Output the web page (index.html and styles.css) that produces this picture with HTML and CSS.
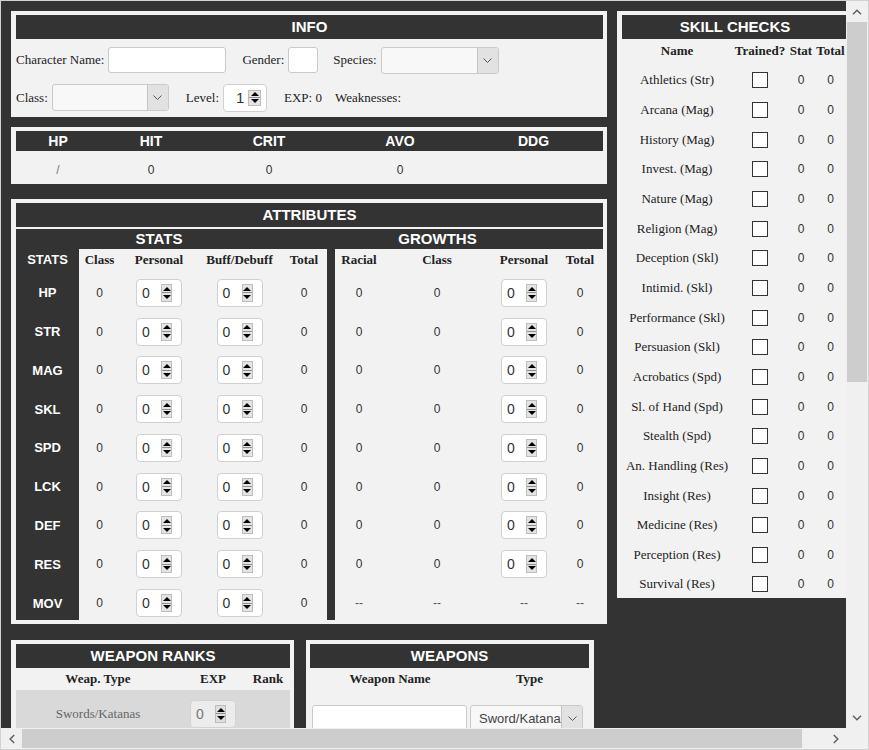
FILE: index.html
```html
<!DOCTYPE html>
<html>
<head>
<meta charset="utf-8">
<title>Character Sheet</title>
<link rel="stylesheet" href="styles.css">
</head>
<body>
<div class="window">
  <div class="viewport">
    <div class="page">
      <div class="col-left">
        <section class="panel info">
          <div class="hbar">INFO</div>
          <div class="info-row r1">
            <span class="lbl">Character Name:</span><span class="field txt w-name"></span>
            <span class="lbl gap16">Gender:</span><span class="field txt w-gender"></span>
            <span class="lbl gap15">Species:</span><span class="field sel w-species"><span class="sel-val"></span><span class="sel-btn"><svg width="9" height="5" viewBox="0 0 9 5"><path d="M0.5 0.5 L4.5 4.5 L8.5 0.5" fill="none" stroke="#555" stroke-width="1"/></svg></span></span>
          </div>
          <div class="info-row r2">
            <span class="lbl">Class:</span><span class="field sel w-class"><span class="sel-val"></span><span class="sel-btn"><svg width="9" height="5" viewBox="0 0 9 5"><path d="M0.5 0.5 L4.5 4.5 L8.5 0.5" fill="none" stroke="#555" stroke-width="1"/></svg></span></span>
            <span class="lbl gap17">Level:</span><span class="num lvl"><span class="nv">1</span><span class="spin"><i class="up"></i><i class="dn"></i></span></span>
            <span class="lbl gap17">EXP: 0</span>
            <span class="lbl gap9">Weaknesses:</span>
          </div>
        </section>

        <section class="panel combat">
          <div class="combat-grid">
            <div class="ch">HP</div><div class="ch">HIT</div><div class="ch">CRIT</div><div class="ch">AVO</div><div class="ch">DDG</div>
            <div class="cv slash">/</div><div class="cv">0</div><div class="cv">0</div><div class="cv">0</div><div class="cv"></div>
          </div>
        </section>

        <section class="panel attrs">
          <div class="hbar">ATTRIBUTES</div>
          <div class="subbar"><span class="sub-stats">STATS</span><span class="sub-growths">GROWTHS</span></div>
          <div class="attr-body">
            <div class="stat-grid">
              <div class="gl gl-h">STATS</div><div class="gh">Class</div><div class="gh">Personal</div><div class="gh">Buff/Debuff</div><div class="gh">Total</div>

              <div class="gl">HP</div><div class="gc v">0</div><div class="gc"><span class="num"><span class="nv">0</span><span class="spin"><i class="up"></i><i class="dn"></i></span></span></div><div class="gc"><span class="num"><span class="nv">0</span><span class="spin"><i class="up"></i><i class="dn"></i></span></span></div><div class="gc v">0</div>
              <div class="gl">STR</div><div class="gc v">0</div><div class="gc"><span class="num"><span class="nv">0</span><span class="spin"><i class="up"></i><i class="dn"></i></span></span></div><div class="gc"><span class="num"><span class="nv">0</span><span class="spin"><i class="up"></i><i class="dn"></i></span></span></div><div class="gc v">0</div>
              <div class="gl">MAG</div><div class="gc v">0</div><div class="gc"><span class="num"><span class="nv">0</span><span class="spin"><i class="up"></i><i class="dn"></i></span></span></div><div class="gc"><span class="num"><span class="nv">0</span><span class="spin"><i class="up"></i><i class="dn"></i></span></span></div><div class="gc v">0</div>
              <div class="gl">SKL</div><div class="gc v">0</div><div class="gc"><span class="num"><span class="nv">0</span><span class="spin"><i class="up"></i><i class="dn"></i></span></span></div><div class="gc"><span class="num"><span class="nv">0</span><span class="spin"><i class="up"></i><i class="dn"></i></span></span></div><div class="gc v">0</div>
              <div class="gl">SPD</div><div class="gc v">0</div><div class="gc"><span class="num"><span class="nv">0</span><span class="spin"><i class="up"></i><i class="dn"></i></span></span></div><div class="gc"><span class="num"><span class="nv">0</span><span class="spin"><i class="up"></i><i class="dn"></i></span></span></div><div class="gc v">0</div>
              <div class="gl">LCK</div><div class="gc v">0</div><div class="gc"><span class="num"><span class="nv">0</span><span class="spin"><i class="up"></i><i class="dn"></i></span></span></div><div class="gc"><span class="num"><span class="nv">0</span><span class="spin"><i class="up"></i><i class="dn"></i></span></span></div><div class="gc v">0</div>
              <div class="gl">DEF</div><div class="gc v">0</div><div class="gc"><span class="num"><span class="nv">0</span><span class="spin"><i class="up"></i><i class="dn"></i></span></span></div><div class="gc"><span class="num"><span class="nv">0</span><span class="spin"><i class="up"></i><i class="dn"></i></span></span></div><div class="gc v">0</div>
              <div class="gl">RES</div><div class="gc v">0</div><div class="gc"><span class="num"><span class="nv">0</span><span class="spin"><i class="up"></i><i class="dn"></i></span></span></div><div class="gc"><span class="num"><span class="nv">0</span><span class="spin"><i class="up"></i><i class="dn"></i></span></span></div><div class="gc v">0</div>
              <div class="gl">MOV</div><div class="gc v">0</div><div class="gc"><span class="num"><span class="nv">0</span><span class="spin"><i class="up"></i><i class="dn"></i></span></span></div><div class="gc"><span class="num"><span class="nv">0</span><span class="spin"><i class="up"></i><i class="dn"></i></span></span></div><div class="gc v">0</div>
            </div>
            <div class="divider"></div>
            <div class="growth-grid">
              <div class="gh">Racial</div><div class="gh">Class</div><div class="gh">Personal</div><div class="gh">Total</div>

              <div class="gc v">0</div><div class="gc v">0</div><div class="gc"><span class="num"><span class="nv">0</span><span class="spin"><i class="up"></i><i class="dn"></i></span></span></div><div class="gc v">0</div>
              <div class="gc v">0</div><div class="gc v">0</div><div class="gc"><span class="num"><span class="nv">0</span><span class="spin"><i class="up"></i><i class="dn"></i></span></span></div><div class="gc v">0</div>
              <div class="gc v">0</div><div class="gc v">0</div><div class="gc"><span class="num"><span class="nv">0</span><span class="spin"><i class="up"></i><i class="dn"></i></span></span></div><div class="gc v">0</div>
              <div class="gc v">0</div><div class="gc v">0</div><div class="gc"><span class="num"><span class="nv">0</span><span class="spin"><i class="up"></i><i class="dn"></i></span></span></div><div class="gc v">0</div>
              <div class="gc v">0</div><div class="gc v">0</div><div class="gc"><span class="num"><span class="nv">0</span><span class="spin"><i class="up"></i><i class="dn"></i></span></span></div><div class="gc v">0</div>
              <div class="gc v">0</div><div class="gc v">0</div><div class="gc"><span class="num"><span class="nv">0</span><span class="spin"><i class="up"></i><i class="dn"></i></span></span></div><div class="gc v">0</div>
              <div class="gc v">0</div><div class="gc v">0</div><div class="gc"><span class="num"><span class="nv">0</span><span class="spin"><i class="up"></i><i class="dn"></i></span></span></div><div class="gc v">0</div>
              <div class="gc v">0</div><div class="gc v">0</div><div class="gc"><span class="num"><span class="nv">0</span><span class="spin"><i class="up"></i><i class="dn"></i></span></span></div><div class="gc v">0</div>
              <div class="gc v dash">--</div><div class="gc v dash">--</div><div class="gc v dash">--</div><div class="gc v dash">--</div>
            </div>
          </div>
        </section>

        <div class="bottom-row">
          <section class="panel ranks">
            <div class="hbar">WEAPON RANKS</div>
            <div class="wr-grid">
              <div class="gh">Weap. Type</div><div class="gh">EXP</div><div class="gh">Rank</div>
              <div class="wr-c wr-name">Swords/Katanas</div><div class="wr-c"><span class="num dis"><span class="nv">0</span><span class="spin"><i class="up"></i><i class="dn"></i></span></span></div><div class="wr-c"></div>
            </div>
          </section>
          <section class="panel weapons">
            <div class="hbar">WEAPONS</div>
            <div class="wp-grid">
              <div class="gh">Weapon Name</div><div class="gh">Type</div>
              <div class="wp-c"><span class="field txt w-wname"></span></div>
              <div class="wp-c"><span class="field sel w-wtype"><span class="sel-val">Sword/Katana</span><span class="sel-btn"><svg width="9" height="5" viewBox="0 0 9 5"><path d="M0.5 0.5 L4.5 4.5 L8.5 0.5" fill="none" stroke="#555" stroke-width="1"/></svg></span></span></div>
            </div>
          </section>
        </div>
      </div>

      <div class="col-right">
        <section class="panel skills">
          <div class="hbar">SKILL CHECKS</div>
          <div class="skill-grid">
            <div class="gh">Name</div><div class="gh">Trained?</div><div class="gh">Stat</div><div class="gh">Total</div>
            <div class="sk-n">Athletics (Str)</div><div class="sk-c"><span class="cb"></span></div><div class="sk-c v">0</div><div class="sk-c v">0</div>
            <div class="sk-n">Arcana (Mag)</div><div class="sk-c"><span class="cb"></span></div><div class="sk-c v">0</div><div class="sk-c v">0</div>
            <div class="sk-n">History (Mag)</div><div class="sk-c"><span class="cb"></span></div><div class="sk-c v">0</div><div class="sk-c v">0</div>
            <div class="sk-n">Invest. (Mag)</div><div class="sk-c"><span class="cb"></span></div><div class="sk-c v">0</div><div class="sk-c v">0</div>
            <div class="sk-n">Nature (Mag)</div><div class="sk-c"><span class="cb"></span></div><div class="sk-c v">0</div><div class="sk-c v">0</div>
            <div class="sk-n">Religion (Mag)</div><div class="sk-c"><span class="cb"></span></div><div class="sk-c v">0</div><div class="sk-c v">0</div>
            <div class="sk-n">Deception (Skl)</div><div class="sk-c"><span class="cb"></span></div><div class="sk-c v">0</div><div class="sk-c v">0</div>
            <div class="sk-n">Intimid. (Skl)</div><div class="sk-c"><span class="cb"></span></div><div class="sk-c v">0</div><div class="sk-c v">0</div>
            <div class="sk-n">Performance (Skl)</div><div class="sk-c"><span class="cb"></span></div><div class="sk-c v">0</div><div class="sk-c v">0</div>
            <div class="sk-n">Persuasion (Skl)</div><div class="sk-c"><span class="cb"></span></div><div class="sk-c v">0</div><div class="sk-c v">0</div>
            <div class="sk-n">Acrobatics (Spd)</div><div class="sk-c"><span class="cb"></span></div><div class="sk-c v">0</div><div class="sk-c v">0</div>
            <div class="sk-n">Sl. of Hand (Spd)</div><div class="sk-c"><span class="cb"></span></div><div class="sk-c v">0</div><div class="sk-c v">0</div>
            <div class="sk-n">Stealth (Spd)</div><div class="sk-c"><span class="cb"></span></div><div class="sk-c v">0</div><div class="sk-c v">0</div>
            <div class="sk-n">An. Handling (Res)</div><div class="sk-c"><span class="cb"></span></div><div class="sk-c v">0</div><div class="sk-c v">0</div>
            <div class="sk-n">Insight (Res)</div><div class="sk-c"><span class="cb"></span></div><div class="sk-c v">0</div><div class="sk-c v">0</div>
            <div class="sk-n">Medicine (Res)</div><div class="sk-c"><span class="cb"></span></div><div class="sk-c v">0</div><div class="sk-c v">0</div>
            <div class="sk-n">Perception (Res)</div><div class="sk-c"><span class="cb"></span></div><div class="sk-c v">0</div><div class="sk-c v">0</div>
            <div class="sk-n">Survival (Res)</div><div class="sk-c"><span class="cb"></span></div><div class="sk-c v">0</div><div class="sk-c v">0</div>
          </div>
        </section>
      </div>
    </div>
  </div>

  <div class="vscroll">
    <div class="sb-btn"><svg width="10" height="6" viewBox="0 0 10 6"><path d="M1 5.2 L5 1.2 L9 5.2" fill="none" stroke="#606060" stroke-width="1.5"/></svg></div>
    <div class="sb-track"><div class="sb-thumb v-thumb"></div></div>
    <div class="sb-btn"><svg width="10" height="6" viewBox="0 0 10 6"><path d="M1 0.8 L5 4.8 L9 0.8" fill="none" stroke="#606060" stroke-width="1.5"/></svg></div>
  </div>
  <div class="hscroll">
    <div class="sb-btn"><svg width="6" height="10" viewBox="0 0 6 10"><path d="M5.2 1 L1.2 5 L5.2 9" fill="none" stroke="#606060" stroke-width="1.5"/></svg></div>
    <div class="sb-track h"><div class="sb-thumb h-thumb"></div></div>
    <div class="sb-btn"><svg width="6" height="10" viewBox="0 0 6 10"><path d="M0.8 1 L4.8 5 L0.8 9" fill="none" stroke="#606060" stroke-width="1.5"/></svg></div>
  </div>
  <div class="corner"></div>
</div>
</body>
</html>
```

FILE: styles.css
```css
* { box-sizing: border-box; }
html, body { margin: 0; padding: 0; }
body {
  background: #fff;
  font-family: "Liberation Serif", "Times New Roman", serif;
  font-size: 13px;
  color: #222;
}

/* window frame with scrollbars */
.window {
  width: 869px;
  height: 750px;
  border: 1px solid #d2d2d2;
  display: grid;
  grid-template-columns: 845px 22px;
  grid-template-rows: 727px 21px;
  background: #f0f0f0;
}
.viewport {
  overflow: hidden;
  background: #333;
}
.vscroll {
  display: flex;
  flex-direction: column;
  background: #f0f0f0;
}
.hscroll {
  display: flex;
  background: #f0f0f0;
}
.corner { background: #f0f0f0; }
.sb-btn {
  flex: 0 0 21px;
  height: 21px;
  display: flex;
  align-items: center;
  justify-content: center;
}
.hscroll .sb-btn { width: 21px; height: 21px; }
.sb-track { flex: 1; display: flex; flex-direction: column; padding: 0 1px; }
.sb-track.h { flex-direction: row; padding: 1px 0; }
.v-thumb { height: 360px; background: #cdcdcd; }
.h-thumb { width: 780px; background: #cdcdcd; }

/* page */
.page {
  display: flex;
  align-items: flex-start;
  gap: 10px;
  padding: 10px;
  width: max-content;
}
.col-left { width: 596px; display: flex; flex-direction: column; }
.col-right { width: 235px; }

.panel {
  background: #f2f2f2;
  padding: 4px 4px 4px 5px;
}
.hbar {
  background: #333;
  color: #fff;
  font: bold 15px "Liberation Sans", Arial, sans-serif;
  text-align: center;
  height: 24px;
  line-height: 24px;
}

.gh {
  font: bold 13px "Liberation Serif", "Times New Roman", serif;
  color: #222;
  display: flex;
  align-items: center;
  justify-content: center;
}
.v {
  font: 12px "Liberation Sans", Arial, sans-serif;
  color: #333;
}

/* form fields */
.field {
  display: inline-flex;
  background: #fff;
  border: 1px solid #cacaca;
  border-radius: 3px;
}
.txt { height: 26px; }
.sel {
  height: 27px;
  background: #f8f8f8;
  overflow: hidden;
  align-items: stretch;
}
.sel-val {
  flex: 1;
  overflow: hidden;
  white-space: nowrap;
  font: 13px "Liberation Sans", Arial, sans-serif;
  color: #444;
  padding-left: 8px;
  display: flex;
  align-items: center;
}
.sel-btn {
  flex: 0 0 21px;
  background: #e2e2e2;
  border-left: 1px solid #c4c4c4;
  display: flex;
  align-items: center;
  justify-content: center;
}

.num {
  display: inline-flex;
  align-items: center;
  justify-content: space-between;
  width: 46px;
  height: 28px;
  background: #fff;
  border: 1px solid #d0d0d0;
  border-radius: 4px;
  padding: 0 9px 0 5px;
  font: 14px "Liberation Sans", Arial, sans-serif;
  color: #333;
}
.spin {
  width: 11px;
  height: 18px;
  display: flex;
  flex-direction: column;
  border: 1px solid #bdbdbd;
  background: #e4e4e4;
}
.spin i {
  flex: 1;
  display: flex;
  align-items: center;
  justify-content: center;
}
.spin .up { border-bottom: 1px solid #8f8f8f; }
.spin .up::before {
  content: "";
  border-left: 4px solid transparent;
  border-right: 4px solid transparent;
  border-bottom: 4px solid #000;
}
.spin .dn::before {
  content: "";
  border-left: 4px solid transparent;
  border-right: 4px solid transparent;
  border-top: 4px solid #000;
}
.num.dis {
  background: #ececec;
  border-color: #d3d3d3;
  color: #777;
}
.num.dis .spin { background: #dedede; }

/* info panel */
.info { padding-bottom: 6px; }
.info-row {
  display: flex;
  align-items: center;
}
.r1 { height: 26px; margin-top: 8px; }
.r2 { height: 27px; margin-top: 11px; }
.lbl { margin-right: 4px; white-space: nowrap; }
.gap9 { margin-left: 9px; }
.gap15 { margin-left: 15px; }
.gap16 { margin-left: 16px; }
.gap17 { margin-left: 17px; }
.w-name { width: 118px; }
.w-gender { width: 30px; }
.w-species { width: 118px; }
.w-class { width: 117px; }
.num.lvl { width: 44px; font-size: 15px; padding: 0 5px 0 12px; }
.num.lvl .spin { width: 13px; height: 16px; }

/* combat stats */
.combat { margin-top: 10px; }
.combat-grid {
  display: grid;
  grid-template-columns: 84px 102px 134px 128px 139px;
  grid-template-rows: 20px 29px;
}
.ch {
  background: #333;
  color: #fff;
  font: bold 14px "Liberation Sans", Arial, sans-serif;
  text-align: center;
  line-height: 20px;
}
.cv {
  font: 12px "Liberation Sans", Arial, sans-serif;
  color: #333;
  text-align: center;
  padding-top: 11px;
  line-height: 16px;
}
.cv.slash { color: #777; }

/* attributes */
.attrs { margin-top: 15px; }
.subbar {
  margin-top: 2px;
  height: 20px;
  background: #333;
  color: #fff;
  font: bold 15px "Liberation Sans", Arial, sans-serif;
  line-height: 20px;
  display: flex;
}
.sub-stats { width: 286px; text-align: center; }
.sub-growths { width: 205px; margin-left: 33px; text-align: center; }
.attr-body { display: flex; }
.stat-grid {
  display: grid;
  grid-template-columns: 63px 41px 78px 83px 46px;
  grid-template-rows: 22px repeat(9, 38.78px);
}
.growth-grid {
  display: grid;
  grid-template-columns: 48px 108px 66px 46px;
  grid-template-rows: 22px repeat(9, 38.78px);
}
.divider { width: 8px; background: #333; }
.gl {
  background: #333;
  color: #fff;
  font: bold 13px "Liberation Sans", Arial, sans-serif;
  display: flex;
  align-items: center;
  justify-content: center;
  padding-top: 5px;
}
.gl.gl-h { padding-top: 0; padding-bottom: 1px; }
.gc {
  display: flex;
  align-items: center;
  justify-content: center;
  padding-top: 5px;
}
.gc.dash { color: #555; }

/* bottom panels */
.bottom-row {
  margin-top: 16px;
  display: flex;
  gap: 12px;
  align-items: flex-start;
}
.ranks { width: 283px; }
.weapons { width: 288px; padding: 4px 5px 4px 4px; }
.wr-grid {
  display: grid;
  grid-template-columns: 164px 66px 44px;
  grid-template-rows: 22px;
  grid-auto-rows: 48px;
}
.wr-c {
  background: #d9d9d9;
  display: flex;
  justify-content: center;
  align-items: flex-start;
  padding-top: 10px;
}
.wr-name {
  line-height: 28px;
  color: #666;
}
.wp-grid {
  display: grid;
  grid-template-columns: 160px 119px;
  grid-template-rows: 22px 48px;
}
.wp-c { padding-top: 15px; }
.w-wname { width: 155px; margin-left: 2px; height: 28px; }
.w-wtype { width: 113px; height: 28px; }

/* skills */
.skills { height: 587px; }
.skill-grid {
  display: grid;
  grid-template-columns: 110px 56px 26px 33px;
  grid-template-rows: 21px;
  grid-auto-rows: 29.67px;
}
.skill-grid .gh { padding-top: 2px; }
.sk-n, .sk-c {
  display: flex;
  align-items: center;
  justify-content: center;
  padding-top: 11px;
}
.sk-n { color: #222; white-space: nowrap; }
.cb {
  width: 16px;
  height: 16px;
  border: 1px solid #333;
  background: #fff;
}
```
